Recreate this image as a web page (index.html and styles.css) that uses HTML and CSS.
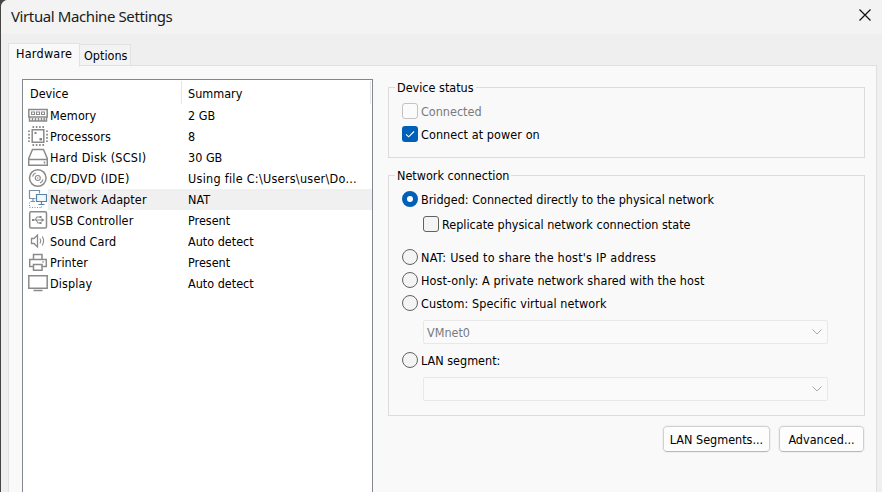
FILE: index.html
```html
<!DOCTYPE html>
<html lang="en">
<head>
<meta charset="utf-8">
<title>Virtual Machine Settings</title>
<link rel="stylesheet" href="styles.css">
</head>
<body>
<div class="window">
  <header class="titlebar">
    <h1>Virtual Machine Settings</h1>
    <svg class="close" width="12" height="12" viewBox="0 0 12 12"><path d="M.5.5l11 11M11.5.5l-11 11"/></svg>
  </header>
  <nav class="tabs">
    <div class="tab active">Hardware</div>
    <div class="tab">Options</div>
  </nav>
  <main class="panel">
    <section class="devices">
      <div class="head"><span class="name">Device</span><span class="sum">Summary</span></div>
      <div class="row">
        <svg class="icon" viewBox="0 0 20 21"><path d="M.8 4.500h18.400v7.500H.8zM1.500 12v4h17v-4M4.500 13v2.500M7.500 13v2.500M10.500 13v2.500M13.500 13v2.500M16.200 13v2.500"/><path class="thin" d="M3.500 7h3v2.500h-3zM8.500 7h3v2.500h-3zM13.500 7h3v2.500h-3z"/></svg>
        <span class="name">Memory</span><span class="sum">2 GB</span>
      </div>
      <div class="row">
        <svg class="icon" viewBox="0 0 20 21"><path d="M4.200 3.700h11.600v12.600H4.200z"/><path class="pins" d="M4.500 1h12M4.500 19h12M1 4.500v12M19 4.500v12"/><path class="solid" d="M6.500 6h2v2h-2zM11.500 12h2.500v2.500h-2.500z"/></svg>
        <span class="name">Processors</span><span class="sum">8</span>
      </div>
      <div class="row">
        <svg class="icon" viewBox="0 0 20 21"><path d="M4.500 2.500h11l3.800 9v6.800H.7v-6.800zM.7 12.500h18.600M16.500 14.500v2"/></svg>
        <span class="name wide">Hard Disk (SCSI)</span><span class="sum">30 GB</span>
      </div>
      <div class="row">
        <svg class="icon" viewBox="0 0 20 21"><circle cx="9.800" cy="10" r="8.300"/><circle class="thin" cx="9.800" cy="10" r="2.500"/><circle class="solid" cx="9.800" cy="10" r=".7"/><path class="thin" d="M4.500 8.500a5.500 5.500 0 0 1 3.200-3.500M15.100 11.500a5.500 5.500 0 0 1-3.200 3.500"/></svg>
        <span class="name wide">CD/DVD (IDE)</span><span class="sum file">Using file C:\Users\user\Do...</span>
      </div>
      <div class="row selected">
        <svg class="icon net" viewBox="0 0 20 21"><path d="M7.500 9.500H1.500v-8h10V4.500M5 9.500v3M2.500 12.500H7"/><path class="front" d="M8.500 5.500h10v7h-10zM13.500 12.500v3M10.500 15.500h6"/><path class="dots" d="M1.500 13.500v5M1.500 18.500h11M13.500 18.500v-2"/></svg>
        <span class="name">Network Adapter</span><span class="sum">NAT</span>
      </div>
      <div class="row">
        <svg class="icon" viewBox="0 0 20 21"><rect x="1.700" y="1.700" width="16.800" height="16.300" rx="1.500"/><path class="thin" d="M4 10h10M7 10l2-3h3M8 10l2 3h2"/><path class="solid" d="M16.500 10l-3-2v4zM4 9h2v2H4zM11.500 6h2v2h-2zM11.500 12h2v2h-2z"/></svg>
        <span class="name">USB Controller</span><span class="sum">Present</span>
      </div>
      <div class="row">
        <svg class="icon" viewBox="0 0 20 21"><path class="mid" d="M3.500 7.500H6l3.500-3.500v12L6 12.500H3.500z"/><path class="thin" d="M12 7.500q1.500 2.500 0 5M14.300 5.500q2.500 4.500 0 9"/></svg>
        <span class="name">Sound Card</span><span class="sum">Auto detect</span>
      </div>
      <div class="row">
        <svg class="icon" viewBox="0 0 20 21"><path d="M5.500 7.500v-5h8.500v5M5.500 14.500H1.700V7.500h16.600v7h-4.300M5.500 12.500H14v5.800H5.500z"/><path class="thin" d="M14 10h2"/></svg>
        <span class="name">Printer</span><span class="sum">Present</span>
      </div>
      <div class="row">
        <svg class="icon" viewBox="0 0 20 21"><path d="M.8 2.800h18.400v12.400H.8zM5.500 17.500h9"/></svg>
        <span class="name">Display</span><span class="sum">Auto detect</span>
      </div>
    </section>

    <section class="settings">
      <fieldset class="status">
        <legend>Device status</legend>
        <label class="opt disabled"><i class="check"></i><span>Connected</span></label>
        <label class="opt"><i class="check on"><svg viewBox="0 0 16 16"><path d="M4 8.300l2.700 2.500L12 5.500"/></svg></i><span class="power">Connect at power on</span></label>
      </fieldset>
      <fieldset class="network">
        <legend>Network connection</legend>
        <label class="opt"><i class="radio on"></i><span>Bridged: Connected directly to the physical network</span></label>
        <label class="opt sub"><i class="check"></i><span>Replicate physical network connection state</span></label>
        <label class="opt nat"><i class="radio"></i><span>NAT: Used to share the host's IP address</span></label>
        <label class="opt"><i class="radio"></i><span class="power">Host-only: A private network shared with the host</span></label>
        <label class="opt"><i class="radio"></i><span class="power">Custom: Specific virtual network</span></label>
        <div class="combo"><span>VMnet0</span><svg width="10" height="6" viewBox="0 0 10 6"><path d="M.5.5L5 5 9.500.5"/></svg></div>
        <label class="opt lan"><i class="radio"></i><span>LAN segment:</span></label>
        <div class="combo"><span></span><svg width="10" height="6" viewBox="0 0 10 6"><path d="M.5.5L5 5 9.500.5"/></svg></div>
      </fieldset>
      <div class="actions">
        <button class="b-lan">LAN Segments...</button>
        <button class="b-adv">Advanced...</button>
      </div>
    </section>
  </main>
</div>
</body>
</html>
```
FILE: styles.css
```css
* { box-sizing: border-box; }
body {
  margin: 0;
  width: 882px;
  height: 492px;
  overflow: hidden;
  background: #454545;
  color: #000;
  font: 12.5px/21px "DejaVu Sans Condensed", "DejaVu Sans", sans-serif;
  font-stretch: condensed;
  white-space: nowrap;
}
.window {
  margin-left: 1px;
  height: 492px;
  display: flex;
  flex-direction: column;
  background: #efefef;
  border-top-left-radius: 7px;
}
.titlebar {
  height: 34px;
  flex: none;
  display: flex;
  justify-content: space-between;
  padding: 0 11px 0 10px;
  background: #f3f3f3;
  border-top-left-radius: 7px;
}
h1 {
  margin: 0;
  font: 400 15px/32px "Noto Sans", sans-serif;
  letter-spacing: -0.4px;
  color: #1a1a1a;
}
.close { margin-top: 9px; stroke: #111; stroke-width: 1.2; fill: none; }
.tabs {
  height: 32px;
  flex: none;
  display: flex;
  align-items: flex-end;
  padding-left: 7px;
}
.tab {
  height: 21px;
  width: 51px;
  margin-bottom: 1px;
  padding-left: 4px;
  background: #f3f3f3;
  border: 1px solid #e2e2e2;
  border-left: 0;
  border-bottom: 0;
  line-height: 22px;
}
.tab.active {
  height: 24px;
  width: 72px;
  margin-bottom: -1px;
  padding-left: 7px;
  background: #f9f9f9;
  border-left: 1px solid #e2e2e2;
  line-height: 20px;
  letter-spacing: 0.25px;
  position: relative;
}
.panel {
  width: 869px;
  height: 440px;
  flex: none;
  margin: -1px 0 0 7px;
  background: #f9f9f9;
  border: 1px solid #e0e0e0;
  display: flex;
  padding: 13px 11px 0 13px;
  gap: 15px;
}
.devices {
  width: 351px;
  height: 430px;
  background: #fff;
  border: 1px solid #828790;
}
.head {
  height: 25px;
  display: flex;
  padding: 1px 1px 1px 7px;
  line-height: 26px;
}
.head .name { width: 152px; border-right: 1px solid #e5e5e5; }
.head .sum { flex: 1; padding-left: 6px; border-right: 1px solid #e5e5e5; }
.row { height: 21px; display: flex; padding-left: 5px; }
.row .name { width: 133px; padding-left: 2px; letter-spacing: 0.1px; }
.row .wide { letter-spacing: 0.25px; }
.row .sum { flex: 1; padding-left: 7px; }
.row .file { letter-spacing: 0.27px; }
.selected .name, .selected .sum { background: #f0f0f0; }
.icon {
  width: 20px;
  height: 21px;
  fill: none;
  stroke: #8a8a8a;
  stroke-width: 1.5;
}
.icon .thin { stroke-width: 1.1; }
.icon .mid { stroke-width: 1.3; }
.icon .solid { fill: #858585; stroke: none; }
.icon .pins { stroke-width: 1.8; stroke-dasharray: 1.6 1.7; }
.net { stroke: #7890a8; stroke-width: 1.2; }
.net .front { fill: #eef7fc; stroke: #5683a8; }
.net .dots { stroke-width: 1; stroke-dasharray: 1 1.5; }
.settings { width: 477px; padding-top: 8px; }
fieldset {
  margin: 0;
  padding: 0 0 0 13px;
  border: 1px solid #dcdcdc;
  min-width: 0;
}
legend {
  margin-left: -7px;
  padding: 0 2px;
  height: 16px;
  line-height: 18px;
}
.status { height: 79px; margin-top: -8px; }
.network { height: 249px; margin-top: 9px; }
.opt { display: flex; align-items: center; gap: 3px; height: 23px; }
.opt span { padding-top: 2px; }
.status legend + .opt { margin-top: 4px; }
.disabled { color: #7a7a7a; }
.power { letter-spacing: 0.08px; }
.check, .radio {
  width: 16px;
  height: 16px;
  flex: none;
  background: #f4f4f4;
  border: 1px solid #626262;
  border-radius: 3px;
}
.disabled .check { border-color: #c3c3c3; background: #fbfbfb; }
.check.on { background: #005fb8; border: 0; }
.check svg { display: block; fill: none; stroke: #fff; stroke-width: 1.1; }
.radio { border-radius: 50%; }
.radio.on { border: 5px solid #005fb8; background: #fff; }
.network legend + .opt { margin-top: 4px; }
.sub { margin: 2px 0 0 21px; }
.nat { margin-top: 10px; letter-spacing: 0.23px; }
.combo {
  width: 405px;
  height: 24px;
  margin: 6px 0 0 21px;
  padding: 0 5px 0 3px;
  display: flex;
  align-items: center;
  justify-content: space-between;
  border: 1px solid #e8e8e8;
  border-radius: 2px;
  background: #fafafa;
  color: #7a7a7a;
}
.combo svg { fill: none; stroke: #aaa; }
.lan { margin-top: 4px; }
.lan + .combo { margin-top: 6px; }
.actions { display: flex; justify-content: flex-end; gap: 9px; padding: 10px 1px 0 0; }
button {
  height: 26px;
  padding: 0;
  font: inherit;
  color: #000;
  background: #fdfdfd;
  border: 1px solid #d0d0d0;
  border-bottom-color: #b8b8b8;
  border-radius: 4px;
  outline: 1px solid #f0f0f0;
}
.b-lan { width: 107px; }
.b-adv { width: 85px; }
```
